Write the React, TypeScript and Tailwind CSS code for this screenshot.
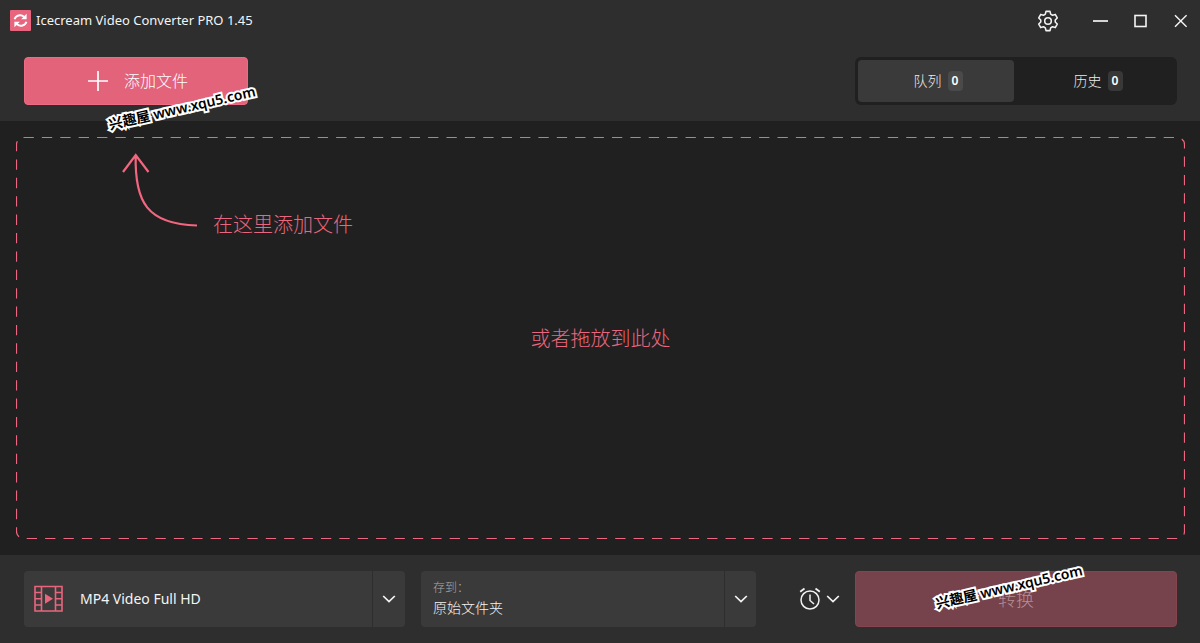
import { useState } from "react";

function Chevron() {
  return (
    <svg width="14" height="8" viewBox="0 0 14 8" fill="none" stroke="#f4f4f4" strokeWidth="1.7" aria-hidden="true">
      <path d="M1.2 1 7 6.6 12.8 1" />
    </svg>
  );
}

function Logo() {
  return (
    <svg width="21" height="21" viewBox="0 0 21 21" aria-hidden="true">
      <rect width="21" height="21" rx="1" fill="#e9657d" />
      <g fill="none" stroke="#fff" strokeWidth="2">
        <path d="M4.6 9.3C5.6 5.6 10.6 3.9 14 6.8" />
        <path d="M16.4 11.7C15.4 15.4 10.4 17.1 7 14.2" />
      </g>
      <path d="M16.6 3.8V9.3H11.2Z" fill="#fff" />
      <path d="M4.4 17.2V11.7H9.8Z" fill="#fff" />
    </svg>
  );
}

function Gear() {
  return (
    <svg width="22" height="22" viewBox="0 0 24 24" fill="none" stroke="#f2f2f2" strokeWidth="1.7" strokeLinejoin="round" aria-hidden="true">
      <path d="M9.8 1.500h4.400l.7 3 2 1.200 3-.9 2.200 3.900-2.200 2.200v2.200l2.200 2.200-2.200 3.900-3-.9-2 1.200-.7 3H9.800l-.7-3-2-1.200-3 .9-2.200-3.900 2.200-2.200v-2.200L1.900 8.700l2.200-3.900 3 .9 2-1.200z" />
      <circle cx="12" cy="12" r="3.600" />
    </svg>
  );
}

function Film() {
  return (
    <svg width="30" height="28" viewBox="0 0 30 28" fill="none" stroke="#e9657d" strokeWidth="1.6" aria-hidden="true">
      <path d="M1 1.500H28V26H1Z M7.500 1.500V26 M21.500 1.500V26 M1 7.500H7.500 M1 13.700H7.500 M1 20H7.500 M21.500 7.500H28 M21.500 13.700H28 M21.500 20H28" />
      <path d="M11 8.700V18.700L19 13.700Z" fill="#e9657d" stroke="none" />
    </svg>
  );
}

function Alarm() {
  return (
    <svg width="22" height="24" viewBox="0 0 22 24" fill="none" stroke="#f2f2f2" strokeWidth="1.500" aria-hidden="true">
      <circle cx="11" cy="13" r="9" />
      <path d="M11 7.500V13.500L15 17" />
      <path d="M1.200 4.700 5.500 1.500 M16.500 1.500 20.800 4.700" strokeWidth="1.800" />
    </svg>
  );
}

function Watermark() {
  return (
    <span
      aria-hidden="true"
      className="pointer-events-none block -rotate-13 text-sm leading-5 font-bold whitespace-nowrap text-black [-webkit-text-stroke:4px_#fff] [paint-order:stroke_fill]"
    >
      兴趣屋 <span className="font-semibold">www.xqu5.com</span>
    </span>
  );
}

function Tab({ label, active, onClick }: { label: string; active: boolean; onClick: () => void }) {
  return (
    <button
      type="button"
      role="tab"
      aria-selected={active}
      onClick={onClick}
      className={
        "flex flex-1 items-center justify-center gap-1.5 rounded pl-1 text-sm font-light text-[#ececec] " +
        (active ? "bg-[#3a3a3a]" : "bg-transparent")
      }
    >
      {label}
      <span
        className={
          "flex h-5 w-[15px] items-center justify-center rounded text-xs font-semibold text-white " +
          (active ? "bg-[#4a4a4a]" : "bg-[#383838]")
        }
      >
        0
      </span>
    </button>
  );
}

export default function App() {
  const [tab, setTab] = useState("queue");
  return (
    <div className="flex min-h-screen flex-col bg-[#202020] font-['Noto_Sans','Noto_Sans_CJK_SC',sans-serif] text-white">
      <header className="bg-[#2e2e2e] pb-4">
        <div className="flex h-[41px] items-center pl-2.5">
          <Logo />
          <h1 className="ml-[5px] text-[13px] font-normal text-[#f4f4f4]">Icecream Video Converter PRO 1.45</h1>
          <div className="ml-auto flex items-center">
            <button type="button" aria-label="设置" className="mr-3 flex h-10 w-10 items-center justify-center">
              <Gear />
            </button>
            <button type="button" aria-label="最小化" className="flex h-10 w-10 items-center justify-center">
              <svg width="16" height="16" viewBox="0 0 16 16" stroke="#f4f4f4" strokeWidth="1.700" aria-hidden="true">
                <path d="M1 8H16" />
              </svg>
            </button>
            <button type="button" aria-label="最大化" className="flex h-10 w-10 items-center justify-center">
              <svg width="14" height="14" viewBox="0 0 14 14" fill="none" stroke="#f4f4f4" strokeWidth="1.600" aria-hidden="true">
                <rect x="2" y="1.500" width="11" height="11" />
              </svg>
            </button>
            <button type="button" aria-label="关闭" className="flex h-10 w-10 items-center justify-center">
              <svg width="14" height="14" viewBox="0 0 14 14" stroke="#f4f4f4" strokeWidth="1.500" aria-hidden="true">
                <path d="M2 1.200 13.600 12.800 M13.600 1.200 2 12.800" />
              </svg>
            </button>
          </div>
        </div>
        <div className="flex items-center justify-between pt-4 pr-[23px] pl-6">
          <div className="relative">
            <button
              type="button"
              className="flex h-12 w-56 items-center justify-center gap-4 rounded border border-[#ee6b83] bg-[#e2637a] pl-1 text-base font-light"
            >
              <svg width="20" height="20" viewBox="0 0 20 20" stroke="#fff" strokeWidth="1.700" aria-hidden="true">
                <path d="M10 0V20M0 10H20" />
              </svg>
              添加文件
            </button>
            <div className="absolute top-[41px] left-[83px] z-10">
              <Watermark />
            </div>
          </div>
          <div role="tablist" className="flex h-12 w-[322px] gap-1 rounded-md bg-[#202020] p-[3px]">
            <Tab label="队列" active={tab === "queue"} onClick={() => setTab("queue")} />
            <Tab label="历史" active={tab === "history"} onClick={() => setTab("history")} />
          </div>
        </div>
      </header>

      <main className="flex flex-1 flex-col py-4 pr-[15px] pl-4">
        <section className="relative flex flex-1 flex-col px-2 text-xl font-light text-[#ea667e]">
          <svg className="absolute inset-0 h-full w-full" fill="none" aria-hidden="true">
            <rect
              x="0.500"
              y="0.500"
              rx="7"
              className="h-[calc(100%-1px)] w-[calc(100%-1px)]"
              stroke="#ee6780"
              strokeWidth="1.200"
              strokeDasharray="10.300 8.090"
            />
          </svg>
          <div className="flex pt-4 pl-24">
            <svg width="78" height="76" viewBox="0 0 78 76" fill="none" stroke="#f2667f" strokeWidth="2.200" aria-hidden="true">
              <path d="M3 19 15.700 2 28.500 19 M15.700 2C14.500 49 27 71 77 72.500" />
            </svg>
            <p className="mt-14 ml-[15px] leading-8">在这里添加文件</p>
          </div>
          <p className="mt-[82px] text-center leading-8">或者拖放到此处</p>
        </section>
      </main>

      <footer className="flex h-[88px] items-center bg-[#2e2e2e] pr-[23px] pl-6">
        <div className="relative h-14 flex-[381_1_0%] rounded bg-[#3a3a3a]">
          <span className="pointer-events-none absolute top-3.5 left-2.5">
            <Film />
          </span>
          <select
            aria-label="格式"
            className="h-full w-full appearance-none bg-transparent pl-14 text-sm text-[#f4f4f4]"
          >
            <option>MP4 Video Full HD</option>
          </select>
          <span className="pointer-events-none absolute inset-y-0 right-0 flex w-[33px] items-center justify-center border-l border-[#2e2e2e]">
            <Chevron />
          </span>
        </div>
        <div className="relative ml-4 flex h-14 flex-[335_1_0%] flex-col rounded bg-[#3a3a3a] pt-2">
          <label htmlFor="folder" className="pl-3 text-xs leading-[18px] font-light text-[#a8a8a8]">
            存到：
          </label>
          <select id="folder" className="h-[22px] w-full appearance-none bg-transparent pl-3 text-sm font-light text-[#f4f4f4]">
            <option>原始文件夹</option>
          </select>
          <span className="pointer-events-none absolute inset-y-0 right-0 flex w-8 items-center justify-center border-l border-[#2e2e2e]">
            <Chevron />
          </span>
        </div>
        <button type="button" aria-label="完成后" className="flex h-14 w-[99px] items-center gap-[5px] pl-[43px]">
          <Alarm />
          <Chevron />
        </button>
        <div className="relative w-[322px]">
          <button
            type="button"
            disabled
            className="h-14 w-full rounded border border-[#84454f] bg-[#76424b] text-lg font-light text-[#b48d93]"
          >
            转换
          </button>
          <div className="absolute top-1.5 left-[79px]">
            <Watermark />
          </div>
        </div>
      </footer>
    </div>
  );
}
